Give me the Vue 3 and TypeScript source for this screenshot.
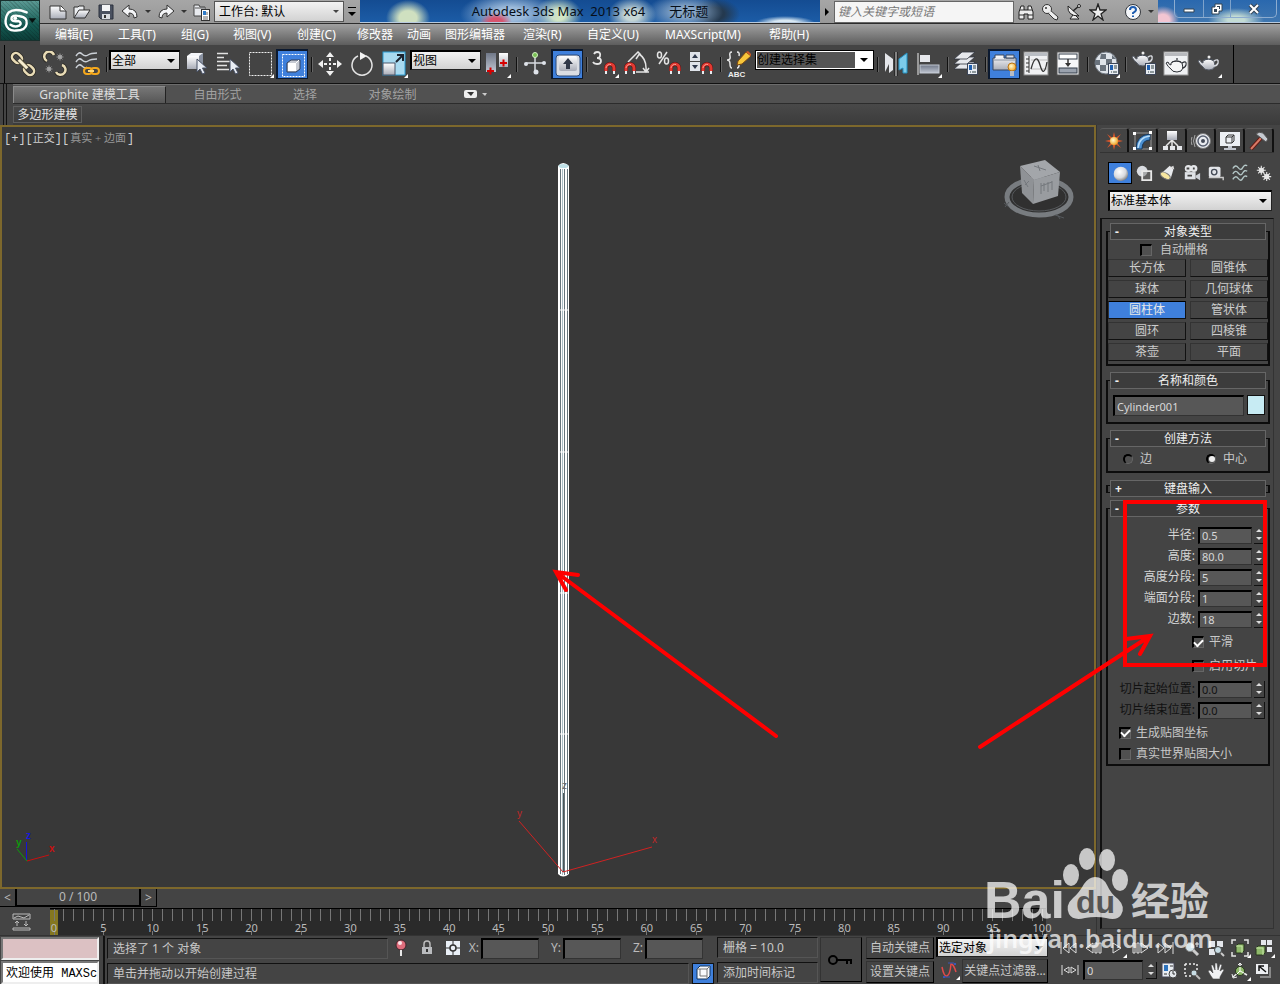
<script setup lang="ts">
import { ref } from 'vue'

interface Tool {
  kind: 'btn' | 'sep' | 'scope' | 'coord' | 'sets'
  icon?: string
  label?: string
  active?: boolean
  fly?: boolean
}
interface Param {
  id: string
  label: string
  value: string
}

const sep: Tool = { kind: 'sep' }
const btn = (icon: string, label: string, fly = false, active = false): Tool => ({ kind: 'btn', icon, label, fly, active })

const tools: Tool[] = [
  btn('link', '选择并链接'), btn('unlink', '断开当前选择链接'), btn('bind', '绑定到空间扭曲'), sep,
  { kind: 'scope' },
  btn('pick', '选择对象'), btn('byname', '按名称选择'), btn('region', '矩形选择区域', true), btn('window', '窗口/交叉', false, true), sep,
  btn('move', '选择并移动'), btn('rotate', '选择并旋转'), btn('scale', '选择并缩放', true),
  { kind: 'coord' },
  btn('pivot', '使用轴点中心', true), sep,
  btn('manip', '选择并操纵'), btn('kbd', '键盘快捷键覆盖切换', false, true), sep,
  btn('snap3', '捕捉开关', true), btn('snapangle', '角度捕捉切换'), btn('snappct', '百分比捕捉切换'), btn('snapspin', '微调器捕捉切换'), sep,
  btn('editsets', '编辑命名选择集'),
  { kind: 'sets' }, sep,
  btn('mirror', '镜像'), btn('align', '对齐', true), sep,
  btn('layers', '层管理器'), sep,
  btn('ribbon', '石墨建模工具', false, true), btn('curve', '曲线编辑器'), btn('schematic', '图解视图'), sep,
  btn('material', '材质编辑器', true), sep,
  btn('rsetup', '渲染设置'), btn('rframe', '渲染帧窗口'), btn('render', '渲染产品', true),
]

const menus = ['编辑(E)', '工具(T)', '组(G)', '视图(V)', '创建(C)', '修改器', '动画', '图形编辑器', '渲染(R)', '自定义(U)', 'MAXScript(M)', '帮助(H)']
const panelTabs = [['create', '创建'], ['modify', '修改'], ['hier', '层次'], ['motion', '运动'], ['display', '显示'], ['hammer', '实用程序']]
const cats = [['geo', '几何体'], ['shapes', '图形'], ['lights', '灯光'], ['camera', '摄影机'], ['helper', '辅助对象'], ['warp', '空间扭曲'], ['system', '系统']]
const primitives = ['长方体', '圆锥体', '球体', '几何球体', '圆柱体', '管状体', '圆环', '四棱锥', '茶壶', '平面']
const params = ref<Param[]>([
  { id: 'radius', label: '半径:', value: '0.5' },
  { id: 'height', label: '高度:', value: '80.0' },
  { id: 'hseg', label: '高度分段:', value: '5' },
  { id: 'cseg', label: '端面分段:', value: '1' },
  { id: 'sides', label: '边数:', value: '18' },
])
const slices = ref<Param[]>([
  { id: 'from', label: '切片起始位置:', value: '0.0' },
  { id: 'to', label: '切片结束位置:', value: '0.0' },
])
const selected = ref('圆柱体')
const objectName = ref('Cylinder001')
const method = ref('center')
const autoGrid = ref(false)
const smooth = ref(true)
const sliceOn = ref(false)
const mapCoords = ref(true)
const realWorld = ref(false)
const frame = ref('0')
const frames = Array.from({ length: 101 }, (_, i) => i)
const axes = ['X', 'Y', 'Z']
const playback = [['first', '转至开头'], ['prev', '上一帧'], ['play', '播放动画'], ['next', '下一帧'], ['last', '转至结尾']]
const navTop = [['zoom', '缩放'], ['zoomall', '缩放所有视图'], ['extents', '最大化显示选定对象'], ['extall', '所有视图最大化显示选定对象']]
const navBottom = [['zregion', '缩放区域'], ['pan', '平移视图'], ['orbit', '环绕'], ['maxview', '最大化视口切换']]
</script>

<template>
  <div class="app">
    <svg class="sprite" aria-hidden="true">
      <defs>
        <linearGradient id="metal" x1="0" y1="0" x2="0" y2="1"><stop offset="0" stop-color="#fff" /><stop offset="1" stop-color="#a9adb8" /></linearGradient>
        <linearGradient id="steel" x1="0" y1="0" x2="0" y2="1"><stop offset="0" stop-color="#707888" /><stop offset="1" stop-color="#c0c6d2" /></linearGradient>
        <radialGradient id="ball" cx=".4" cy=".35" r=".7"><stop offset="0" stop-color="#fff" /><stop offset=".6" stop-color="#d8dade" /><stop offset="1" stop-color="#777" /></radialGradient>
        <radialGradient id="bulb" cx=".4" cy=".4" r=".6"><stop offset="0" stop-color="#fffbd0" /><stop offset="1" stop-color="#f2a72c" /></radialGradient>
        <g id="magnet">
          <path d="M2 12V6a4 4 0 0 1 8 0v6" fill="none" stroke="#5a1010" stroke-width="4" />
          <path d="M2 9V6a4 4 0 0 1 8 0v3" fill="none" stroke="#e23a32" stroke-width="3" />
          <path d="M2 6a4 4 0 0 1 5-3.500" fill="none" stroke="#ff9c90" />
          <path d="M0 9h4v4H0zM8 9h4v4H8z" fill="#444" /><path d="M1 9h2v3H1zM9 9h2v3H9z" fill="#e8ecf0" />
        </g>
        <g id="dlg">
          <rect x=".5" y=".5" width="10" height="11" fill="#e8ecf2" stroke="#3c4658" /><path d="M2 2h3v5H2z" fill="#1f5faf" /><path d="M6 3h3M6 5h3M3 9h1M5 9h4" stroke="#344" />
        </g>
        <g id="pot">
          <path d="M5 8Q10 4 16 8L17 13Q16 17 11 17T5 14Q2 12 0 8L2 7Q3 10 5 10Z" fill="url(#metal)" stroke="#555b66" />
          <path d="M16 8Q21 5 20 10Q19 13 16 13" fill="none" stroke="#d6d9df" stroke-width="1.500" /><path d="M6 7Q11 5 15 7M11 5V3" stroke="#444a54" fill="none" /><circle cx="11" cy="4" r="1.500" fill="#eee" />
        </g>
        <g id="potdark">
          <path d="M5 8Q10 4 16 8L17 13Q16 17 11 17T5 14Q2 12 0 8L2 7Q3 10 5 10Z" fill="#f4f5f6" stroke="#2c3036" />
          <path d="M16 8Q21 5 20 10Q19 13 16 13M6 7Q11 5 15 7M11 5V3" fill="none" stroke="#2c3036" stroke-width="1.200" />
        </g>
        <g id="cursor"><path d="M0 0V13L3 10L5.500 15L8 14L5.500 9H10Z" fill="#e9edf4" stroke="#475064" /></g>
        <g id="gear" fill="none" stroke="#e6e6e6"><circle cx="0" cy="0" r="2.500" fill="#e6e6e6" /><path d="M0-5V5M-5 0H5M-3.500-3.500L3.500 3.500M3.500-3.500L-3.500 3.500" stroke-width="1.200" /></g>
      </defs>

      <!-- main toolbar, 26 x 26 -->
      <symbol id="i-link" viewBox="0 0 26 26"><g fill="none" transform="rotate(45 13 13)"><g stroke="#2c2a24" stroke-width="4"><rect x="-1" y="9" width="11" height="8" rx="4" /><rect x="16" y="9" width="11" height="8" rx="4" /></g><g stroke="#e9dcb6" stroke-width="2.500"><rect x="-1" y="9" width="11" height="8" rx="4" /><rect x="16" y="9" width="11" height="8" rx="4" /></g><path d="M7 13H19" stroke="#554e3a" stroke-width="5" /><path d="M7 13H19" stroke="#f6edcf" stroke-width="3" /></g></symbol>
      <symbol id="i-unlink" viewBox="0 0 26 26"><path d="M5 10A5 5 0 1 1 12 4M14 21A5 5 0 1 0 20 14" fill="none" stroke="#2c2a24" stroke-width="4" /><path d="M5 10A5 5 0 1 1 12 4M14 21A5 5 0 1 0 20 14" fill="none" stroke="#e9dcb6" stroke-width="2.500" /><use href="#gear" transform="translate(18 6) scale(.7)" opacity=".6" /><use href="#gear" transform="translate(7 18) scale(.7)" opacity=".6" /></symbol>
      <symbol id="i-bind" viewBox="0 0 26 26"><path d="M2 5Q5 0 8 3T14 4T23 2M2 11Q5 6 8 9T14 10T23 8M2 17Q5 12 8 15T13 16" fill="none" stroke="#cbd0d6" stroke-width="1.500" /><rect x="10" y="17" width="8" height="6" rx="3" fill="none" stroke="#f5a81c" stroke-width="2" /><rect x="17" y="17" width="8" height="6" rx="3" fill="none" stroke="#f5a81c" stroke-width="2" /><path d="M14 20H20" stroke="#ffd878" stroke-width="2" /></symbol>
      <symbol id="i-pick" viewBox="0 0 26 26"><path d="M4 5L8 2H20V14L16 18H4Z" fill="#f4f6f9" /><path d="M4 5H16V18H4Z" fill="url(#metal)" /><path d="M16 5L20 2V14L16 18Z" fill="#8991a0" /><use href="#cursor" transform="translate(14 8)" /></symbol>
      <symbol id="i-byname" viewBox="0 0 26 26"><path d="M2 2.500H13M2 6.500H9M2 10.500H15M2 14.500H12M2 18.500H14" stroke="#e2e2e2" stroke-width="1.500" /><use href="#cursor" transform="translate(15 8)" /></symbol>
      <symbol id="i-region" viewBox="0 0 26 26"><rect x="2.500" y="1.500" width="22" height="23" fill="none" stroke="#f0f0f0" stroke-dasharray="2 1" /></symbol>
      <symbol id="i-window" viewBox="0 0 26 26"><rect x="2.500" y="2.500" width="22" height="22" fill="none" stroke="#fff" stroke-dasharray="2 1" /><path d="M7 11L11 8H20V17L16 20H7Z" fill="#c7cbd3" stroke="#303c54" /><path d="M8 11H16V19H8Z" fill="#fff" /><path d="M16 11L19 8" stroke="#fff" /></symbol>
      <symbol id="i-move" viewBox="0 0 26 26"><path d="M13 1L17 6H9ZM13 25L17 20H9ZM1 13L6 9V17ZM25 13L20 9V17ZM12 7H14V10H12ZM12 16H14V19H12ZM7 12H10V14H7ZM16 12H19V14H16Z" fill="#f1f1f1" /><rect x="12" y="12" width="2" height="2" fill="#f1f1f1" /></symbol>
      <symbol id="i-rotate" viewBox="0 0 26 26"><path d="M9 5A10 10 0 1 0 17 5" fill="none" stroke="#e4e4e4" stroke-width="1.500" /><path d="M11 1L18 5L11 9Z" fill="#f4f4f4" /></symbol>
      <symbol id="i-scale" viewBox="0 0 26 26"><rect x="2" y="1" width="22" height="23" fill="#a9daf0" stroke="#2b9cd2" /><rect x="2" y="12" width="12" height="12" fill="url(#metal)" stroke="#4a5568" /><path d="M15 11L21 5M16 4H22V10" fill="none" stroke="#1c2430" stroke-width="2" /></symbol>
      <symbol id="i-pivot" viewBox="0 0 26 26"><rect x="2" y="2" width="10" height="19" fill="url(#steel)" /><rect x="15" y="2" width="9" height="14" fill="url(#metal)" /><path d="M3 20H10M6.500 16.500V23.500M16 12H23M19.500 8.500V15.500" stroke="#d60000" stroke-width="2" /></symbol>
      <symbol id="i-manip" viewBox="0 0 26 26"><path d="M13 4V22M4 12H22" stroke="#d7dae0" stroke-width="1.500" /><circle cx="13" cy="4" r="2.500" fill="#78bf54" stroke="#d3f1c2" /><circle cx="4" cy="13" r="2" fill="#dfe3ea" /><circle cx="22" cy="12" r="2" fill="#dfe3ea" /><circle cx="14" cy="21" r="2.500" fill="#dfe3ea" /></symbol>
      <symbol id="i-kbd" viewBox="0 0 26 26"><rect x="1" y="3" width="24" height="21" rx="3" fill="#dadde3" stroke="#2d4a78" /><rect x="4" y="4" width="18" height="15" rx="2" fill="url(#metal)" /><path d="M13 6L18 12H15V17H11V12H8Z" fill="#303848" /></symbol>
      <symbol id="i-snap3" viewBox="0 0 26 26"><path d="M2 3Q3 1 5 1Q9 1 8 5Q8 7 5 7Q9 7 9 10Q9 13 5 13Q2 13 1 11" fill="none" stroke="#e6e6e6" stroke-width="1.800" /><use href="#magnet" x="12" y="11" /></symbol>
      <symbol id="i-snapangle" viewBox="0 0 26 26"><path d="M4 11L14 1L17 4M15 3Q23 8 22 20M12 21H25M12 8L16 2M19 17L22 21L25 17" fill="none" stroke="#e4e4e4" stroke-width="1.500" /><use href="#magnet" x="0" y="11" /></symbol>
      <symbol id="i-snappct" viewBox="0 0 26 26"><path d="M11 1L3 13" stroke="#e4e4e4" stroke-width="1.500" /><g fill="none" stroke="#e4e4e4" stroke-width="1.500"><ellipse cx="3.500" cy="4" rx="2" ry="3" /><ellipse cx="10.500" cy="10" rx="2" ry="3" /></g><use href="#magnet" x="13" y="11" /></symbol>
      <symbol id="i-snapspin" viewBox="0 0 26 26"><rect x="2" y="1" width="10" height="9" fill="#dfe3ea" /><rect x="2" y="11" width="10" height="9" fill="#dfe3ea" /><path d="M7 3L10 7H4ZM7 18L10 14H4Z" fill="#2e384c" /><use href="#magnet" x="13" y="11" /></symbol>
      <symbol id="i-editsets" viewBox="0 0 26 26"><path d="M6 1Q3 1 4 5T1 9Q4 9 4 13T6 17M11 1Q14 1 13 5M13 10V14Q13 17 11 17" fill="none" stroke="#e6e6e6" stroke-width="1.500" /><path d="M12 10L20 1L25 5L16 13L11 14Z" fill="#f7c63b" stroke="#7d4a12" /><path d="M20 1L22 0L25 3V5Z" fill="#cf5b28" /></symbol>
      <symbol id="i-mirror" viewBox="0 0 26 26"><path d="M2 2L10 8V19L6 22V13L2 21Z" fill="#e4e6ea" /><path d="M13 1V25" stroke="#111" stroke-width="3" /><path d="M13 1V25" stroke="#f5f5f5" /><path d="M24 2L16 8V19L20 17V22H24Z" fill="#7ccbea" stroke="#2492c2" /></symbol>
      <symbol id="i-align" viewBox="0 0 26 26"><path d="M3 2V24" stroke="#eee" /><rect x="5" y="4" width="10" height="7" fill="#e6e8ec" /><rect x="5" y="14" width="19" height="8" fill="url(#steel)" stroke="#c4cad4" /></symbol>
      <symbol id="i-layers" viewBox="0 0 26 26"><g fill="#e6e8ec" stroke="#303540" stroke-width=".8"><path d="M1 18L9 11H22L14 18Z" /><path d="M1 13L9 6H22L14 13Z" /><path d="M1 8L9 1H22L14 8Z" /></g><use href="#dlg" x="14" y="12" /></symbol>
      <symbol id="i-ribbon" viewBox="0 0 26 26"><path d="M3 3H12V6H24V18H1V6H3Z" fill="url(#metal)" stroke="#39465e" /><path d="M14 3H22V6H14Z" fill="#dde1e8" stroke="#39465e" /><path d="M2 8H23" stroke="#8a93a2" /><circle cx="20" cy="15" r="4" fill="url(#bulb)" stroke="#ba7515" /><path d="M18 19H22V24H18Z" fill="#b8bcc5" /></symbol>
      <symbol id="i-curve" viewBox="0 0 26 26"><rect x="1" y="1" width="24" height="23" fill="#f0f1f3" stroke="#888" /><path d="M2 2H24V5H2Z" fill="#b9bdc3" /><path d="M6 5V22M3 8H6M3 12H6M3 16H6M3 20H6" stroke="#333" /><path d="M8 9H24M8 18H24" stroke="#bbb" /><path d="M8 18Q13 0 17 14T24 11" fill="none" stroke="#333" stroke-width="1.300" /></symbol>
      <symbol id="i-schematic" viewBox="0 0 26 26"><rect x="2" y="1" width="22" height="23" fill="#f6f7f9" stroke="#555" /><rect x="4" y="3" width="18" height="5" fill="#fff" stroke="#333c49" /><rect x="4" y="17" width="18" height="5" fill="#9aa2ae" stroke="#333c49" /><path d="M13 8V13" stroke="#333" stroke-width="1.500" /><path d="M10 12H16L13 16Z" fill="#333" /></symbol>
      <symbol id="i-material" viewBox="0 0 26 26"><circle cx="13" cy="12" r="11" fill="#dfe4ea" stroke="#707882" /><path d="M8 3H13V8H7ZM13 8H19V14H13ZM19 4L23 8H19ZM2 9H7V14H2ZM7 14H13V20H7Z" fill="#69727c" /><use href="#dlg" x="15" y="12" /></symbol>
      <symbol id="i-rsetup" viewBox="0 0 26 26"><use href="#pot" x="1" y="-2" /><use href="#dlg" x="14" y="12" /></symbol>
      <symbol id="i-rframe" viewBox="0 0 26 26"><rect x="1" y="1" width="24" height="23" fill="#eff1f3" stroke="#999" /><path d="M2 2H24V5H2Z" fill="#b7b9bd" /><use href="#potdark" x="3" y="4" /></symbol>
      <symbol id="i-render" viewBox="0 0 26 26"><use href="#pot" x="3" y="2" /></symbol>

      <!-- title bar, 18 x 18 -->
      <symbol id="i-new" viewBox="0 0 18 18"><path d="M1 3H12L17 8V16H1Z" fill="url(#metal)" stroke="#333" /><path d="M11 3V8H17" fill="#fff" stroke="#333" /></symbol>
      <symbol id="i-open" viewBox="0 0 18 18"><path d="M1 15V4H5L6 3H11V7" fill="#eceef1" stroke="#333" /><path d="M1 15L6 7H17L12 15Z" fill="url(#metal)" stroke="#333" /></symbol>
      <symbol id="i-save" viewBox="0 0 18 18"><path d="M2 2H16V16H4L2 14Z" fill="#4a5160" stroke="#2b313c" /><path d="M5 2H13V8H5Z" fill="#f4f5f7" /><path d="M5 11H13V16H5Z" fill="#d8dbe0" /><path d="M7 12H9V15H7Z" fill="#333" /></symbol>
      <symbol id="i-undo" viewBox="0 0 18 18"><path d="M8 2V6Q16 6 16 14L13 15Q13 10 8 10V14L1 8Z" fill="#f3f4f6" stroke="#333" /></symbol>
      <symbol id="i-redo" viewBox="0 0 18 18"><path d="M10 2V6Q2 6 2 14L5 15Q5 10 10 10V14L17 8Z" fill="#f3f4f6" stroke="#333" /></symbol>
      <symbol id="i-project" viewBox="0 0 18 18"><path d="M1 13V2H6L7 4H12V13Z" fill="#e8eaee" stroke="#444" /><path d="M2 5H11" stroke="#555" /><rect x="8.500" y="6.500" width="8" height="11" fill="#fff" stroke="#333" /><path d="M10 8H13V12H10Z" fill="#2e7bc9" /><path d="M10 14H15M10 16H15M14 9V12" stroke="#666" /></symbol>
      <symbol id="i-binoc" viewBox="0 0 18 18"><path d="M2 16V9L4 3H7V7H11V3H14L16 9V16H11V11H7V16Z" fill="#eee" stroke="#222" /><path d="M2 12H7M11 12H16M3 7H7M11 7H15" stroke="#333" /></symbol>
      <symbol id="i-key" viewBox="0 0 18 18"><path d="M9 7L17 14L16 17L13 16L7 10" fill="#eee" stroke="#333" /><circle cx="6" cy="6" r="4.500" fill="#eee" stroke="#333" /><path d="M8 8L15 15" stroke="#eee" stroke-width="2" /><circle cx="5" cy="5" r="1" fill="#333" /></symbol>
      <symbol id="i-dish" viewBox="0 0 18 18"><path d="M8 12L5 16H14L10 12" fill="#eee" stroke="#222" /><path d="M3 3Q2 13 14 13Z" fill="#eee" stroke="#222" /><path d="M8 8L14 3" stroke="#222" stroke-width="1.500" /><circle cx="14" cy="3" r="1.500" fill="#eee" stroke="#222" /></symbol>
      <symbol id="i-star" viewBox="0 0 18 18"><path d="M9 1L11 7H17L12 11L14 17L9 13L4 17L6 11L1 7H7Z" fill="#eee" stroke="#222" stroke-width="1.300" /></symbol>
      <symbol id="i-help" viewBox="0 0 18 18"><circle cx="9" cy="9" r="7.500" fill="#f5f7fa" stroke="#34383e" /><path d="M6 7Q6 4 9 4T12 7Q12 8 9 10V11M9 12.500V14" fill="none" stroke="#1d5cb0" stroke-width="2" /></symbol>

      <!-- command panel, 20 x 20 -->
      <symbol id="i-create" viewBox="0 0 20 20"><path d="M10 1L11.500 7L17 3L13 8.500L19 10L13 11.500L17 17L11.500 13L10 19L8.500 13L3 17L7 11.500L1 10L7 8.500L3 3L8.500 7Z" fill="#d5562c" /><circle cx="10" cy="10" r="4" fill="url(#bulb)" /></symbol>
      <symbol id="i-modify" viewBox="0 0 20 20"><path d="M2 2H18V18H2Z" fill="none" stroke="#999" /><path d="M3 18Q3 4 17 3V9Q9 9 9 18Z" fill="#4b8fd0" stroke="#16365a" /><path d="M5 17Q6 6 17 5" fill="none" stroke="#b7dcf8" stroke-width="1.500" /><g fill="#fff"><rect x="0" y="1" width="3" height="3" /><rect x="0" y="16" width="3" height="3" /><rect x="16" y="0" width="3" height="3" /><rect x="16" y="16" width="3" height="3" /></g></symbol>
      <symbol id="i-hier" viewBox="0 0 20 20"><path d="M10 9V16M10 9L4 15M10 9L16 15" stroke="#e5e5e5" stroke-width="1.500" /><rect x="5" y="0" width="10" height="9" fill="url(#metal)" /><g fill="#e5e7eb"><rect x="1" y="15" width="5" height="4" /><rect x="8" y="15" width="5" height="4" /><rect x="15" y="15" width="5" height="4" /></g></symbol>
      <symbol id="i-motion" viewBox="0 0 20 20"><circle cx="12" cy="10" r="7.500" fill="#e9ebef" stroke="#777" /><circle cx="12" cy="10" r="5" fill="none" stroke="#596070" stroke-width="1.500" /><circle cx="12" cy="10" r="2" fill="#454b58" /><path d="M4 4Q1 10 4 16M1 6Q-1 10 1 14" fill="none" stroke="#aaa" /></symbol>
      <symbol id="i-display" viewBox="0 0 20 20"><rect x="0" y="1" width="20" height="14" fill="#edf0f4" /><path d="M8 15H12V17H16V19H4V17H8Z" fill="#c2c6ce" /><path d="M6 6L8 4H14V10L12 12H6ZM6 6H12V12M12 6L14 4" fill="none" stroke="#333" /></symbol>
      <symbol id="i-hammer" viewBox="0 0 20 20"><path d="M2 18L12 7" stroke="#63150f" stroke-width="4" /><path d="M2 18L12 7" stroke="#d77a66" stroke-width="2" /><path d="M7 3Q10 0 14 2L19 8L17 11L12 7Z" fill="#c6cad1" stroke="#555" /></symbol>
      <symbol id="i-geo" viewBox="0 0 20 20"><circle cx="11" cy="11" r="8" fill="url(#ball)" /></symbol>
      <symbol id="i-shapes" viewBox="0 0 20 20"><circle cx="8" cy="8" r="6" fill="#d9dce1" /><path d="M8 8H18V18H8Z" fill="#777" fill-opacity=".5" stroke="#e8e8e8" stroke-width="2" /></symbol>
      <symbol id="i-lights" viewBox="0 0 20 20"><path d="M3 10L12 2L16 6L13 16Z" fill="#e8eaed" /><ellipse cx="7" cy="13" rx="6" ry="3" transform="rotate(30 7 13)" fill="#f7e6a0" stroke="#777" /><path d="M12 4L16 2L17 6" fill="#ddd" /></symbol>
      <symbol id="i-camera" viewBox="0 0 20 20"><circle cx="6" cy="5" r="4" fill="#e5e7ea" /><circle cx="12" cy="5" r="4" fill="#e5e7ea" /><path d="M2 9H14V17H2Z" fill="#dfe2e7" /><path d="M14 13L19 10V18L14 15Z" fill="#cdd1d8" /><path d="M4 5H7M11 5H13M5 13H10" stroke="#444" stroke-width="2" /></symbol>
      <symbol id="i-helper" viewBox="0 0 20 20"><rect x="2" y="3" width="13" height="12" rx="2" fill="#e3e5e9" /><circle cx="8" cy="9" r="3" fill="none" stroke="#444a56" stroke-width="1.500" /><path d="M2 15H18V18" fill="none" stroke="#ccc" stroke-width="1.500" /></symbol>
      <symbol id="i-warp" viewBox="0 0 20 20"><path d="M2 5Q5 0 8 4T13 4T18 2M2 11Q5 6 8 10T13 10T18 8M2 17Q5 12 8 16T13 16T18 14" fill="none" stroke="#b4c7c7" stroke-width="1.500" /></symbol>
      <symbol id="i-system" viewBox="0 0 20 20"><use href="#gear" transform="translate(7 7)" /><use href="#gear" transform="translate(13 14)" /></symbol>

      <!-- status bar, 18 x 18 -->
      <symbol id="i-pin" viewBox="0 0 18 18"><circle cx="9" cy="6" r="5" fill="#df6d7c" stroke="#40232a" /><circle cx="8" cy="4" r="2" fill="#fce4e8" /><path d="M8 11H10V17H8Z" fill="#e8e8e8" /></symbol>
      <symbol id="i-lock" viewBox="0 0 18 18"><path d="M6 8V5Q6 2 9 2T12 5V8" fill="none" stroke="#bbb" stroke-width="1.500" /><rect x="4" y="8" width="10" height="7" fill="#b9bbbe" /><path d="M9 10V13" stroke="#333" stroke-width="2" /></symbol>
      <symbol id="i-offset" viewBox="0 0 18 18"><rect x="2" y="2" width="14" height="14" fill="#eaf0f7" /><circle cx="9" cy="9" r="3" fill="none" stroke="#333" stroke-width="1.500" /><path d="M9 2V6M9 12V16M2 9H6M12 9H16" stroke="#333" /></symbol>
      <symbol id="i-isolate" viewBox="0 0 18 18"><path d="M3 5L6 2H16V12L13 15H3Z" fill="#f8fafc" stroke="#12345c" /><path d="M3 5H13V15M13 5L16 2M6 5V12H13" fill="none" stroke="#777" /></symbol>
      <symbol id="i-first" viewBox="0 0 18 18"><path d="M1 3V15M9 4V14L3 9ZM16 4V14L10 9Z" fill="none" stroke="#ddd" /></symbol>
      <symbol id="i-prev" viewBox="0 0 18 18"><path d="M9 4V14L2 9Z" fill="none" stroke="#ddd" /><path d="M11 4H13V14H11ZM15 4H17V14H15Z" fill="none" stroke="#ddd" /></symbol>
      <symbol id="i-play" viewBox="0 0 18 18"><path d="M5 4V14L13 9Z" fill="none" stroke="#ddd" /></symbol>
      <symbol id="i-next" viewBox="0 0 18 18"><path d="M9 4V14L16 9Z" fill="none" stroke="#ddd" /><path d="M1 4H3V14H1ZM5 4H7V14H5Z" fill="none" stroke="#ddd" /></symbol>
      <symbol id="i-last" viewBox="0 0 18 18"><path d="M17 3V15M9 4V14L15 9ZM2 4V14L8 9Z" fill="none" stroke="#ddd" /></symbol>
      <symbol id="i-keymode" viewBox="0 0 18 18"><path d="M1 4V14M17 4V14M8 6V12L3 9ZM10 6V12L15 9Z" fill="none" stroke="#ddd" /></symbol>
      <symbol id="i-fcurve" viewBox="0 0 18 18"><path d="M2 6Q4 16 7 15T11 3Q13 2 16 11" fill="none" stroke="#e24a4a" stroke-width="1.500" /><path d="M4 16H10M8 2H14" stroke="#3a56b8" /><path d="M14 2H16V4H14ZM3 15H5V17H3Z" fill="#3a56b8" /></symbol>
      <symbol id="i-timecfg" viewBox="0 0 18 18"><rect x="2" y="2" width="12" height="14" fill="#e9edf2" stroke="#445" /><path d="M4 4H8V10H4Z" fill="#2e73be" /><circle cx="13" cy="13" r="4" fill="#e4e8ec" stroke="#444" /><path d="M13 10V13H15M4 13H7M10 5H13" fill="none" stroke="#333" /></symbol>
      <symbol id="i-zoom" viewBox="0 0 18 18"><circle cx="7" cy="8" r="4.500" fill="#d5e7ed" stroke="#888" /><path d="M10 11L15 16" stroke="#ccc" stroke-width="3" /><path d="M14 3V8M12 5H16" stroke="#eee" /></symbol>
      <symbol id="i-zoomall" viewBox="0 0 18 18"><path d="M2 2H8V8H2ZM10 2H16V8H10ZM2 10H8V16H2Z" fill="#e3e6eb" /><circle cx="11" cy="11" r="3.500" fill="#c7dce4" stroke="#444" /><path d="M14 14L17 17" stroke="#ccc" stroke-width="2" /></symbol>
      <symbol id="i-extents" viewBox="0 0 18 18"><path d="M1 5V1H5M13 1H17V5M17 13V17H13M5 17H1V13" fill="none" stroke="#e4e4e4" stroke-width="1.500" /><path d="M5 7L7 5H13V12L11 14H5Z" fill="#8fb96b" stroke="#26351c" /><path d="M5 7H11V14" fill="none" stroke="#c5e5a8" /></symbol>
      <symbol id="i-extall" viewBox="0 0 18 18"><path d="M6 1H11V6H6ZM12 1H17V6H12ZM12 8H17V13H12Z" fill="#e3e6eb" /><path d="M1 9L3 7H10V14L8 16H1Z" fill="#8fb96b" stroke="#26351c" /><path d="M1 9H8V16" fill="none" stroke="#c5e5a8" /></symbol>
      <symbol id="i-zregion" viewBox="0 0 18 18"><path d="M2 2H14V9M2 2V14H8" fill="none" stroke="#eee" stroke-dasharray="2 2" stroke-width="1.500" /><circle cx="11" cy="11" r="3" fill="#c7dce4" stroke="#555" /><path d="M13 13L17 17" stroke="#bbb" stroke-width="2" /></symbol>
      <symbol id="i-pan" viewBox="0 0 18 18"><path d="M6 17Q3 13 1 9L3 8L6 11L4 3H6L8 8V1H10L11 8L13 2L15 3L13 9L16 7L17 8L13 15V17Z" fill="#f0f1f3" stroke="#444" stroke-width=".6" /></symbol>
      <symbol id="i-orbit" viewBox="0 0 18 18"><path d="M9 2V9L2 15M9 9L16 13" fill="none" stroke="#eee" stroke-width="1.500" /><circle cx="9" cy="9" r="4.500" fill="#8fb96b" stroke="#26351c" /><path d="M9 5V9L6 12M9 9L13 11" fill="none" stroke="#fff" /><path d="M1 12L2 16L6 15M7 3L9 1L11 3" fill="none" stroke="#eee" /></symbol>
      <symbol id="i-maxview" viewBox="0 0 18 18"><path d="M1 2H13V12H1Z" fill="#eceef1" /><path d="M15 5V15H5" fill="none" stroke="#888" stroke-width="2" /><path d="M11 10L5 5M4 9V4H9" fill="none" stroke="#111" stroke-width="1.500" /></symbol>
    </svg>

    <header class="head">
      <button class="logo" aria-label="应用程序菜单">
        <svg width="40" height="41" viewBox="0 0 40 41" aria-hidden="true">
          <path d="M27 12Q15 7 8 12Q4 17 5 24Q7 32 16 31Q26 31 27 24Q28 17 20 16Q11 14 11 19Q12 22 18 21Q23 23 19 26Q14 28 10 25" fill="none" stroke="#fff" stroke-width="2.500" stroke-linecap="round" />
          <circle cx="15" cy="18" r="2" fill="#fff" /><path d="M29 18H37L33 23Z" fill="#06110f" />
        </svg>
      </button>
      <div class="titlebar">
        <div class="qat">
          <button v-for="n in ['new', 'open', 'save', 'undo']" :key="n" class="q" :aria-label="n"><svg><use :href="'#i-' + n" /></svg></button>
          <button class="mini" aria-label="撤消历史"></button>
          <button class="q" aria-label="redo"><svg><use href="#i-redo" /></svg></button>
          <button class="mini" aria-label="重做历史"></button>
          <button class="q" aria-label="项目文件夹"><svg><use href="#i-project" /></svg></button>
          <span class="sel workspace"><select aria-label="工作台"><option>工作台: 默认</option></select></span>
          <button class="overflow" aria-label="自定义快速访问工具栏"></button>
        </div>
        <div class="caption"><span>Autodesk 3ds Max&nbsp; 2013 x64</span><span>无标题</span></div>
        <div class="info">
          <button class="expand" aria-label="折叠信息中心"></button>
          <input class="search" type="text" placeholder="键入关键字或短语" aria-label="搜索">
          <button v-for="n in ['binoc', 'key', 'dish', 'star']" :key="n" class="q" :aria-label="n"><svg><use :href="'#i-' + n" /></svg></button>
          <button class="q help" aria-label="帮助"><svg><use href="#i-help" /></svg></button>
          <button class="mini" aria-label="帮助菜单"></button>
        </div>
        <div class="winbox">
          <div class="wincontrols">
            <button aria-label="最小化"><svg width="12" height="12"><path d="M1 6H11V9H1Z" fill="#fff" stroke="#345" /></svg></button>
            <button aria-label="还原"><svg width="12" height="12"><path d="M4 1H11V8H8V11H1V4H4Z" fill="#fff" stroke="#345" /><path d="M3 6H6V9H3ZM6 3H9V6H8V4H6Z" fill="#345" /></svg></button>
            <button aria-label="关闭"><svg width="12" height="12"><path d="M2 2L10 10M10 2L2 10" stroke="#345" stroke-width="4" /><path d="M2 2L10 10M10 2L2 10" stroke="#fff" stroke-width="2" /></svg></button>
          </div>
        </div>
      </div>
      <nav class="menubar"><button v-for="m in menus" :key="m">{{ m }}</button></nav>
    </header>

    <div class="toolrow">
      <div class="toolbar">
        <template v-for="(t, i) in tools" :key="i">
          <button v-if="t.kind === 'btn'" class="tool" :class="{ active: t.active, fly: t.fly }" :aria-label="t.label"><svg><use :href="'#i-' + t.icon" /></svg><small v-if="t.icon === 'editsets'">ABC</small></button>
          <span v-else-if="t.kind === 'sep'" class="tsep"></span>
          <span v-else-if="t.kind === 'scope'" class="sel tsel"><select aria-label="选择过滤器"><option>全部</option></select></span>
          <span v-else-if="t.kind === 'coord'" class="sel tsel"><select aria-label="参考坐标系"><option>视图</option></select></span>
          <span v-else class="combo"><input type="text" value="创建选择集" aria-label="命名选择集"><button aria-label="展开选择集"></button></span>
        </template>
      </div>
    </div>

    <div class="ribbon">
      <div class="ribtabs">
        <button class="rt on">Graphite 建模工具</button>
        <button class="rt">自由形式</button>
        <button class="rt">选择</button>
        <button class="rt">对象绘制</button>
        <button class="ribmin" aria-label="最小化功能区"><svg width="26" height="10"><rect x="1" y="1" width="13" height="8" rx="2" fill="#eee" /><path d="M4 3H11L8 7Z" fill="#333" /><path d="M19 4H24L22 7Z" fill="#ccc" /></svg></button>
      </div>
      <div class="ribpanel"><button>多边形建模</button></div>
    </div>

    <div class="work">
      <main class="left">
        <section class="viewport" aria-label="正交视口">
          <svg class="scene" aria-hidden="true">
            <g transform="translate(-2 -127)">
              <path d="M558 166Q563 160 569 166V874Q563 879 558 874Z" fill="#fff" />
              <path d="M560.500 169V874M564.500 169V875M567.500 169V874" stroke="#66757c" />
              <path d="M562.500 169V875" stroke="#a9bdc5" />
              <ellipse cx="563.500" cy="166" rx="5" ry="2" fill="#c0e2e8" />
              <path d="M558 310H569M558 452H569M558 593H569M558 734H569" stroke="#fff" />
              <path d="M563.500 793V872" stroke="#4d5659" />
              <path d="M519 821L563 872L652 847" fill="none" stroke="#d02222" />
              <text x="517" y="817" class="axis" fill="#c02828">y</text>
              <text x="652" y="843" class="axis" fill="#c02828">x</text>
              <text x="562" y="789" class="axis" fill="#666">z</text>
              <path d="M26.500 861V842" stroke="#1414d8" /><path d="M27 861L17 849" stroke="#0c9c0c" /><path d="M27 861L49 855" stroke="#c81010" />
              <text x="26" y="839" class="axis tri" fill="#1717df">z</text><text x="16" y="846" class="axis tri" fill="#0c9c0c">y</text><text x="49" y="852" class="axis tri" fill="#c81010">x</text>
            </g>
          </svg>
          <svg class="cube" viewBox="0 0 80 70" aria-hidden="true">
            <ellipse cx="39" cy="43" rx="32" ry="18" fill="#303030" stroke="#787c80" stroke-width="5" />
            <ellipse cx="39" cy="43" rx="27" ry="14" fill="none" stroke="#56595c" />
            <path d="M20 12L45 6L60 18L34 26Z" fill="#a3a6aa" /><path d="M20 12L34 26L33 50L22 39Z" fill="#8f9296" /><path d="M34 26L60 18L58 42L33 50Z" fill="#999ca0" />
            <path d="M34 12L46 16M38 11L40 17M24 26L28 33M25 31L29 27M41 29V40M44 29V37M48 28V38M52 27V36M41 32L52 28" stroke="#74787d" fill="none" />
            <path d="M4 49L9 53M5 53L9 48M55 61L64 64M60 65L57 60" stroke="#55595d" />
          </svg>
          <div class="vlabel"><button>[+]</button><button>[<b>正交</b>]</button><button>[<i>真实 + 边面</i>]</button></div>
        </section>
        <div class="slider"><button aria-label="上一帧">&lt;</button><button class="thumb">0 / 100</button><button aria-label="下一帧">&gt;</button></div>
        <div class="track">
          <button class="minicurve" aria-label="打开迷你曲线编辑器"><svg width="20" height="18"><path d="M1 1H18V6H1ZM1 15H18V17H1ZM2 5L6 3L12 5L17 2M5 13V8M3 10L5 8L7 10M14 8V13M12 11L14 13L16 11" fill="none" stroke="#bbb" /></svg></button>
          <div class="ruler">
            <svg aria-hidden="true">
              <rect x="-4" y="1" width="8" height="25" fill="#847720" />
              <template v-for="f in frames" :key="f">
                <line :x1="f + '%'" :x2="f + '%'" y1="0" y2="12" />
                <line v-if="f % 5 === 0" :x1="f + '%'" :x2="f + '%'" y1="22" y2="26" />
                <text v-if="f % 5 === 0" :x="f + '%'" y="23">{{ f }}</text>
              </template>
            </svg>
          </div>
        </div>
      </main>

      <aside class="panel">
        <nav class="ptabs"><button v-for="[n, l] in panelTabs" :key="n" :aria-label="l" :class="{ on: n === 'create' }"><svg><use :href="'#i-' + n" /></svg></button></nav>
        <div class="cats"><button v-for="[n, l] in cats" :key="n" :aria-label="l" :class="{ on: n === 'geo' }"><svg><use :href="'#i-' + n" /></svg></button></div>
        <span class="sel kind"><select aria-label="几何体类别"><option>标准基本体</option></select></span>
        <div class="rollouts">
          <section class="roll">
            <button class="rhead"><span>-</span>对象类型</button>
            <label class="chk autogrid"><input v-model="autoGrid" type="checkbox">自动栅格</label>
            <div class="prims"><button v-for="p in primitives" :key="p" :class="{ on: p === selected }" @click="selected = p">{{ p }}</button></div>
          </section>
          <section class="roll">
            <button class="rhead"><span>-</span>名称和颜色</button>
            <div class="namerow"><input v-model="objectName" class="field" type="text" aria-label="对象名称"><button class="swatch" aria-label="对象颜色"></button></div>
          </section>
          <section class="roll">
            <button class="rhead"><span>-</span>创建方法</button>
            <div class="radios">
              <label class="chk"><input v-model="method" type="radio" name="method" value="edge">边</label>
              <label class="chk"><input v-model="method" type="radio" name="method" value="center">中心</label>
            </div>
          </section>
          <section class="roll closed"><button class="rhead"><span>+</span>键盘输入</button></section>
          <section class="roll params">
            <button class="rhead"><span>-</span>参数</button>
            <div class="plist">
              <div v-for="p in params" :key="p.id" class="prow">
                <label :for="p.id">{{ p.label }}</label><input :id="p.id" v-model="p.value" class="field" type="text"><span class="spin"><button aria-label="增加"></button><button aria-label="减少"></button></span>
              </div>
            </div>
            <label class="chk inner"><input v-model="smooth" type="checkbox">平滑</label>
            <label class="chk inner"><input v-model="sliceOn" type="checkbox">启用切片</label>
            <div class="plist off">
              <div v-for="p in slices" :key="p.id" class="prow">
                <label :for="p.id">{{ p.label }}</label><input :id="p.id" v-model="p.value" class="field" type="text" disabled><span class="spin"><button aria-label="增加"></button><button aria-label="减少"></button></span>
              </div>
            </div>
            <label class="chk outer"><input v-model="mapCoords" type="checkbox">生成贴图坐标</label>
            <label class="chk outer"><input v-model="realWorld" type="checkbox">真实世界贴图大小</label>
          </section>
        </div>
      </aside>
    </div>

    <footer class="status">
      <div class="listener"><input type="text" class="pink" aria-label="宏录制器"><input type="text" value="欢迎使用 MAXScript" aria-label="MAXScript 侦听器"></div>
      <div class="prompts">
        <div class="srow">
          <output class="well grow">选择了 1 个 对象</output>
          <button class="s" aria-label="孤立"><svg><use href="#i-pin" /></svg></button>
          <button class="s" aria-label="选择锁定切换"><svg><use href="#i-lock" /></svg></button>
          <button class="s" aria-label="偏移模式变换输入"><svg><use href="#i-offset" /></svg></button>
          <label v-for="a in axes" :key="a" class="coord">{{ a }}:<input class="field" type="text"></label>
        </div>
        <div class="srow">
          <output class="well grow">单击并拖动以开始创建过程</output>
          <button class="s isolate" aria-label="自适应降级"><svg><use href="#i-isolate" /></svg></button>
        </div>
      </div>
      <div class="gridcol"><output class="well">栅格 = 10.0</output><button class="well">添加时间标记</button></div>
      <button class="bigkey" aria-label="设置关键点"><svg width="28" height="14"><circle cx="6" cy="7" r="4" fill="none" stroke="#000" stroke-width="2" /><path d="M10 7H25M20 7V11M24 7V11" stroke="#000" stroke-width="2" /></svg></button>
      <div class="keycol"><button>自动关键点</button><button>设置关键点</button></div>
      <div class="filtercol">
        <span class="sel"><select aria-label="选择列表"><option>选定对象</option></select></span>
        <div class="filterrow"><button class="s fly" aria-label="新建关键点的默认切线"><svg><use href="#i-fcurve" /></svg></button><button class="raised">关键点过滤器...</button></div>
      </div>
      <div class="playcol">
        <div class="srow"><button v-for="[n, l] in playback" :key="n" class="s pb" :class="{ fly: n === 'play' }" :aria-label="l"><svg><use :href="'#i-' + n" /></svg></button></div>
        <div class="srow">
          <button class="s km" aria-label="关键点模式切换"><svg><use href="#i-keymode" /></svg></button>
          <input v-model="frame" class="field framebox" type="text" aria-label="当前帧">
          <span class="spin"><button aria-label="增加"></button><button aria-label="减少"></button></span>
          <button class="s tc" aria-label="时间配置"><svg><use href="#i-timecfg" /></svg></button>
        </div>
      </div>
      <div class="navcol">
        <button v-for="[n, l] in [...navTop, ...navBottom]" :key="n" class="s" :class="{ fly: ['extents', 'extall', 'orbit'].includes(n) }" :aria-label="l"><svg><use :href="'#i-' + n" /></svg></button>
      </div>
    </footer>

    <svg class="marks" aria-hidden="true">
      <g fill="none" stroke="#f00" stroke-width="4" stroke-linecap="round">
        <rect x="1125" y="502" width="140" height="163" />
        <path d="M776 736L556 572M578 575L556 572L566 590" />
        <path d="M980 747L1150 636M1126 639L1150 636L1140 654" />
      </g>
    </svg>
    <svg class="mark" viewBox="0 0 236 116" aria-label="Baidu 经验">
      <g fill="#fff" fill-opacity=".72">
        <text x="0" y="78" class="wm1">Bai</text>
        <ellipse cx="87" cy="35" rx="8" ry="11" /><ellipse cx="103" cy="19" rx="8" ry="11" /><ellipse cx="123" cy="20" rx="8" ry="11" /><ellipse cx="136" cy="40" rx="8" ry="11" />
        <path d="M111 37Q119 37 123 45Q127 54 134 59Q142 67 137 75Q133 81 122 78Q112 76 101 78Q89 81 85 74Q81 65 89 58Q95 53 100 44Q105 37 111 37Z" />
        <text x="147" y="75" class="wm2">经验</text>
        <text x="4" y="108" class="wm3">jingyan.baidu.com</text>
      </g>
      <text x="92" y="73" class="wm4" fill="#555">du</text>
    </svg>
  </div>
</template>

<style>
body { background: #444; }
</style>

<style scoped>
* { box-sizing: border-box; }
.app { position: relative; display: flex; flex-direction: column; min-height: 100vh; min-width: 1280px; overflow: hidden; background: #444; color: #d6d6d6; font: 12px/16px "Noto Sans", "Noto Sans CJK SC", sans-serif; }
button, input, select { font: inherit; color: inherit; margin: 0; padding: 0; border: 0; border-radius: 0; background: none; outline: 0; min-width: 0; }
button { white-space: nowrap; }
svg { display: block; }
.sprite { position: absolute; width: 0; height: 0; }

.sel { position: relative; display: flex; background: linear-gradient(#f2f2f2, #d2d2d2); border: 1px solid #222; border-top: 2px solid #000; border-left: 2px solid #000; color: #000; }
.sel select { appearance: none; width: 100%; padding: 0 16px 0 1px; }
.sel::after { content: ""; position: absolute; right: 4px; top: 50%; margin-top: -2px; border: 4px solid transparent; border-top-color: #000; border-bottom: 0; pointer-events: none; }

.head { display: grid; grid-template-columns: 40px 1fr; grid-template-rows: 24px 21px; }
.logo { grid-row: span 2; background: repeating-linear-gradient(45deg, #0002 0 1px, transparent 1px 3px), linear-gradient(#5b9a94, #155c54 60%, #0c3d38); border: 1px solid #18302d; height: 41px; display: flex; align-items: center; justify-content: center; }
.titlebar { display: flex; border-bottom: 1px solid #2c2c2c; min-width: 0; }
.qat, .info { display: flex; align-items: center; background: linear-gradient(#a6a6a6, #989898); }
.qat { width: 320px; padding-left: 6px; }
.q { width: 24px; height: 22px; display: grid; place-items: center; flex: none; }
.q svg { width: 18px; height: 18px; }
.mini { width: 12px; height: 22px; flex: none; display: grid; place-items: center; }
.mini::after { content: ""; border: 3px solid transparent; border-top-color: #333; border-bottom: 0; }
.workspace { width: 130px; height: 21px; border: 1px solid #555; }
.workspace select { padding-left: 4px; }
.workspace::after { border-width: 3px; border-bottom: 0; border-top-color: #444; }
.overflow { width: 16px; height: 12px; display: grid; place-items: center; }
.overflow::before { content: ""; width: 8px; height: 1px; background: #000; }
.overflow::after { content: ""; border: 4px solid transparent; border-top-color: #000; border-bottom: 0; }
.caption { flex: 1; display: flex; justify-content: center; gap: 24px; align-items: center; color: #060e18; font-size: 13px; white-space: nowrap; border-bottom: 1px solid #b8cade;
  background: radial-gradient(ellipse 22px 18px at 48px 18px, #cfe0c0 40%, transparent), radial-gradient(ellipse 16px 10px at 136px 22px, #d8546e 40%, transparent), radial-gradient(ellipse 50px 22px at 150px 14px, #9dbbdb 30%, transparent), radial-gradient(ellipse 24px 18px at 198px 15px, #d3e6c5 30%, transparent), radial-gradient(ellipse 24px 18px at 272px 15px, #c6d6d5 30%, transparent), radial-gradient(ellipse 38px 18px at 325px 12px, #86a5c6 30%, transparent), radial-gradient(ellipse 26px 16px at 354px 14px, #24394f 40%, transparent), radial-gradient(ellipse 30px 7px at 425px 23px, #d9e8f2 40%, transparent), linear-gradient(#144c92, #1c5ca6); }
.info { width: 338px; }
.expand { width: 14px; height: 22px; display: grid; place-items: center; }
.expand::after { content: ""; border: 4px solid transparent; border-left-color: #000; border-right: 0; }
.search { width: 180px; height: 22px; background: #f5f5f5; border: 1px solid #666; padding-left: 3px; font-style: italic; color: #333; }
.search::placeholder { color: #777; opacity: 1; }
.help { margin-left: 11px; }
.winbox { width: 122px; background: radial-gradient(ellipse 16px 14px at 5px 20px, #f3c5d2 40%, transparent), radial-gradient(ellipse 28px 12px at 78px 20px, #c4dcd4 30%, transparent), linear-gradient(#2a68ae, #4077b0); border-bottom: 1px solid #b8cade; padding: 0 3px 0 16px; }
.wincontrols { display: grid; grid-template-columns: 29px 27px 1fr; height: 18px; border: 1px solid #8cacd0; border-top: 0; border-radius: 0 0 5px 5px; }
.wincontrols button { display: grid; place-items: center; border-right: 1px solid #7da2cb; }
.wincontrols button:last-child { border: 0; }
.menubar { display: grid; grid-template-columns: 63px 63px 52px 64px 60px 50px 38px 78px 64px 78px 104px 1fr; padding-left: 15px; background: linear-gradient(#a0a0a0, #5d5d5d); color: #fff; }
.menubar button { text-align: left; }

.toolrow { background: #444; height: 39px; border-bottom: 1px solid #111; }
.toolbar { width: 1234px; height: 38px; display: flex; align-items: center; padding-left: 7px; border-right: 1px solid #000; box-shadow: inset 4px 0 #444, inset 5px 0 #000; }
.tool { position: relative; width: 32px; height: 30px; display: grid; place-items: center; flex: none; }
.tool svg { width: 26px; height: 26px; }
.tool small { position: absolute; left: 5px; bottom: 0; font: bold 8px/8px "Liberation Sans", sans-serif; color: #eee; }
.tool.active { background: #3f80dc; border: 1px solid #0c1a30; border-width: 2px 1px 1px 2px; }
.fly { position: relative; }
.fly::after { content: ""; position: absolute; right: 2px; bottom: 1px; border: 2px solid #fff; border-top-color: transparent; border-left-color: transparent; }
.tsep { width: 6px; height: 15px; flex: none; background: linear-gradient(90deg, transparent 3px, #111 3px 4px, #666 4px 5px, transparent 5px); }
.tsel { width: 71px; height: 20px; flex: none; align-self: flex-start; margin-top: 5px; }
.combo { width: 119px; height: 20px; flex: none; display: flex; align-self: flex-start; margin-top: 5px; border: 1px solid #000; background: #fff; padding: 1px; }
.combo input { flex: 1; background: #555; color: #000; }
.combo button { width: 17px; display: grid; place-items: center; }
.combo button::after { content: ""; border: 4px solid transparent; border-top-color: #000; border-bottom: 0; }

.ribbon { padding-left: 10px; border-left: 3px solid #444; box-shadow: inset 1px 0 #111, inset 3px 0 #444, inset 4px 0 #111; }
.ribtabs { display: flex; height: 20px; align-items: flex-end; background: #515151; border-top: 1px solid #6c6c6c; border-bottom: 1px solid #2c2c2c; color: #a2a2a2; }
.rt { height: 17px; width: 103px; }
.rt:nth-child(3) { width: 72px; }
.rt.on { width: 153px; background: linear-gradient(#777, #565656); border: 1px solid #8a8a8a; border-right-color: #222; border-bottom: 0; color: #ddd; }
.ribmin { margin-left: 19px; height: 18px; }
.ribpanel { height: 21px; background: linear-gradient(#494949, #3b3b3b); padding-top: 2px; }
.ribpanel button { width: 69px; height: 17px; border: 1px solid #5e5e5e; color: #e4e4e4; line-height: 15px; display: block; }

.work { flex: 1; display: grid; grid-template-columns: 1fr 184px; }
.left { display: flex; flex-direction: column; min-width: 0; }
.viewport { position: relative; flex: 1; border: 2px solid #7d682c; background: #383838; overflow: hidden; }
.scene { position: absolute; inset: 0; width: 100%; height: 100%; }
.cube { position: absolute; right: 14px; top: 27px; width: 80px; height: 70px; }
.axis { font: 10px "Liberation Sans", sans-serif; }
.tri { font-weight: 700; }
.vlabel { position: relative; display: flex; padding: 3px 0 0 2px; font: 12px/16px "Liberation Mono", "Noto Sans CJK SC", monospace; color: #d0d0d0; }
.vlabel b { font-weight: 400; font-size: 11px; }
.vlabel i { font: 11px/16px "Liberation Serif", "Noto Sans CJK SC", serif; color: #999; padding: 0 1px; }
.slider { display: flex; height: 18px; margin-bottom: 1px; }
.slider button { width: 16px; border-right: 1px solid #000; border-bottom: 1px solid #000; color: #bbb; line-height: 16px; }
.slider .thumb { width: 125px; border-right: 2px solid #000; border-bottom: 2px solid #000; border-left: 1px solid #000; }
.track { display: flex; height: 27px; }
.minicurve { width: 50px; display: grid; place-items: center; padding-right: 7px; }
.ruler { flex: 1; margin-right: 50px; padding: 0 4px; background: #2a2a2a; border-top: 1px solid #000; }
.ruler svg { width: 100%; height: 26px; overflow: visible; }
.ruler line { stroke: #777; shape-rendering: crispEdges; }
.ruler text { fill: #bbb; text-anchor: middle; font-size: 11px; }

.panel { display: flex; flex-direction: column; padding: 3px 6px 6px 3px; border-left: 1px solid #333; }
.ptabs { display: flex; height: 25px; border-bottom: 1px solid #333; }
.ptabs button { flex: none; width: 29px; display: grid; place-items: center; border-right: 2px solid #111; border-top: 1px solid #5a5a5a; border-radius: 3px 3px 0 0; }
.ptabs svg { width: 20px; height: 20px; }
.cats { display: flex; padding: 9px 0 0 8px; height: 32px; }
.cats button { width: 24px; flex: none; display: grid; place-items: center; height: 22px; }
.cats svg { width: 18px; height: 18px; }
.cats .on { background: #3f80dc; border: 1px solid #000; }
.kind { height: 21px; margin: 5px 2px 0 8px; }
.rollouts { flex: 1; margin-top: 7px; border: 1px solid #111; border-width: 1px 1px 1px 2px; border-right-color: #333; border-bottom-color: #333; padding: 12px 3px 0 4px; }
.roll { border: 1px solid #0c0c0c; border-width: 1px 2px 2px; margin-bottom: 14px; }
.rhead { position: relative; display: block; width: calc(100% - 4px); height: 17px; margin: -9px 2px 0; border: 1px solid #666; background: #3c3c3c; color: #f0f0f0; line-height: 15px; }
.rhead span { position: absolute; left: 4px; font-weight: 700; }
.chk { display: flex; align-items: center; gap: 8px; height: 21px; color: #c8c8c8; white-space: nowrap; }
.chk input { appearance: none; width: 12px; height: 12px; flex: none; background: #505050; border: 1px solid #666; border-top: 2px solid #000; border-left: 2px solid #000; display: grid; place-items: center; }
.chk input[type="checkbox"]:checked::after { content: ""; width: 7px; height: 4px; border: 2px solid #fff; border-top: 0; border-right: 0; transform: rotate(-45deg); margin-top: -2px; }
.chk input[type="radio"] { border-radius: 50%; width: 10px; height: 10px; }
.chk input[type="radio"]:checked::after { content: ""; width: 6px; height: 6px; border-radius: 50%; background: #eee; }
.autogrid { padding-left: 32px; height: 19px; }
.prims { display: grid; grid-template-columns: 1fr 1fr; gap: 3px 4px; padding-bottom: 3px; }
.prims button { height: 18px; border: 1px solid #333; border-right: 1px solid #111; border-bottom: 1px solid #111; color: #ccc; line-height: 16px; }
.prims .on { background: #3f80dc; border-top-color: #000; color: #e8e8e8; }
.field { background: #575757; border: 1px solid #333; border-top: 2px solid #000; border-left: 2px solid #000; padding-left: 2px; color: #d8d8d8; font-size: 11px; }
.namerow { display: flex; gap: 3px; padding: 6px 3px 6px 5px; }
.namerow .field { flex: 1; height: 21px; }
.swatch { width: 18px; height: 20px; background: #c7ebf3; border: 1px solid #111; }
.radios { display: grid; grid-template-columns: 83px 1fr; padding: 1px 0 2px 15px; }
.radios .chk { gap: 7px; }
.closed { height: 8px; margin: -2px 0 15px; border-bottom-width: 1px; }
.closed .rhead { margin-top: -6px; }
.plist { display: grid; gap: 5px; padding: 10px 3px 3px 0; }
.prow { display: flex; align-items: center; justify-content: flex-end; height: 16px; white-space: nowrap; }
.prow .field { width: 54px; height: 17px; margin: 0 2px 0 3px; }
.spin { display: grid; width: 11px; height: 17px; border-right: 1px solid #111; border-bottom: 1px solid #111; flex: none; }
.spin button { display: grid; place-items: center; }
.spin button::after { content: ""; border: 3px solid transparent; border-bottom-color: #ddd; border-top: 0; }
.spin button:last-child::after { border: 3px solid transparent; border-top-color: #ddd; border-bottom: 0; }
.inner { padding-left: 84px; gap: 5px; height: 24px; }
.off { padding: 3px 3px 4px 0; color: #111; }
.off .field { color: #111; }
.outer { padding-left: 11px; gap: 5px; }
.params { margin-bottom: 0; }

.status { display: flex; height: 49px; border-top: 1px solid #333; padding-right: 5px; }
.s { position: relative; display: grid; place-items: center; flex: none; width: 26px; height: 22px; }
.s svg { width: 18px; height: 18px; }
.listener { width: 105px; border-right: 2px solid #111; padding: 1px 5px 0 1px; display: grid; gap: 0; }
.listener input { width: 98px; height: 23px; background: #fff; border: 2px solid #eee; border-top-color: #777; border-left-color: #777; color: #000; padding-left: 3px; font: 12px "Liberation Mono", "Noto Sans CJK SC", monospace; }
.listener .pink { background: #dcc1c3; }
.prompts { flex: 1; min-width: 0; padding: 1px 0 0 2px; display: grid; gap: 3px; }
.srow { display: flex; align-items: center; height: 22px; }
.well { display: block; height: 21px; padding: 0 5px; line-height: 19px; border: 1px solid #555; border-top-color: #111; border-left-color: #111; text-align: left; white-space: nowrap; color: #c8c8c8; }
.grow { flex: 1; }
.coord { display: flex; align-items: center; width: 82px; justify-content: flex-end; padding-right: 7px; gap: 2px; color: #bbb; }
.coord .field { width: 58px; height: 21px; }
.coord:last-child { padding-right: 14px; width: 89px; }
.coord:nth-of-type(1) { width: 80px; }
.isolate { width: 22px; height: 21px; background: #3f80dc; border: 1px solid #111; margin: 0 3px; }
.gridcol { width: 101px; display: grid; gap: 3px; padding: 1px 0 0; }
.bigkey { width: 42px; margin: 1px 4px 2px 2px; border: 1px solid #333; border-right-color: #000; border-bottom-color: #000; display: grid; place-items: center; }
.keycol { width: 68px; display: grid; gap: 2px; padding: 1px 0 1px; }
.keycol button, .raised { border: 1px solid #333; border-right-color: #000; border-bottom-color: #000; color: #c8c8c8; }
.filtercol { width: 115px; padding: 1px 1px 1px 2px; display: grid; gap: 2px; grid-template-rows: 20px 1fr; }
.filterrow { display: flex; }
.raised { flex: 1; }
.playcol { width: 130px; padding: 1px 0 0 8px; }
.pb { width: 24px; }
.km { width: 26px; }
.framebox { width: 63px; height: 20px; }
.playcol .spin { margin-left: 3px; }
.tc { width: 20px; margin-left: 2px; }
.navcol { display: grid; grid-template-columns: repeat(4, 24px); padding: 1px 0 1px; }

.marks { position: absolute; inset: 0; width: 100%; height: 100%; pointer-events: none; }
.mark { position: absolute; right: 60px; bottom: 28px; width: 236px; height: 116px; overflow: visible; pointer-events: none; }
.wm1 { font: bold 52px "Liberation Sans", sans-serif; }
.wm2 { font: bold 39px "Noto Sans CJK SC", sans-serif; }
.wm3 { font: 600 25px "Noto Sans", sans-serif; }
.wm4 { font: bold 32px "Liberation Sans", sans-serif; }
</style>
